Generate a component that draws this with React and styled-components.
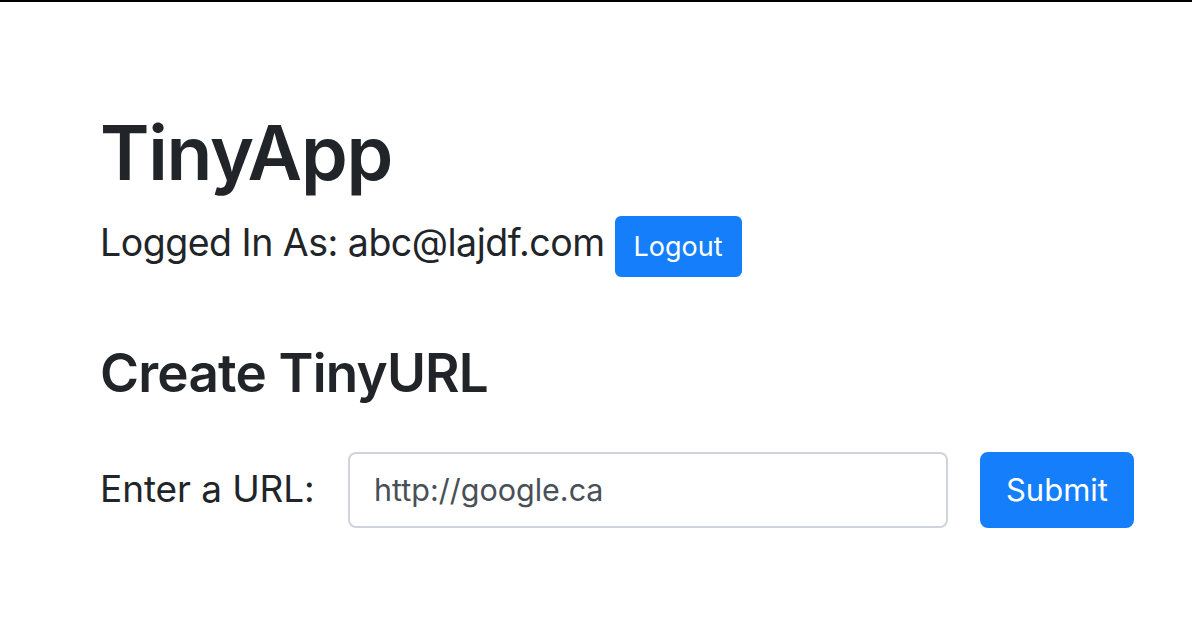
import React from 'react';
import styled, { createGlobalStyle } from 'styled-components';

export default function App(){
	return(
		<>
			<GlobalStyle/>
			<Page>
				<Title>TinyApp</Title>
				<UserRow>
					<UserText>Logged In As: abc@lajdf.com</UserText>
					<Button small>Logout</Button>
				</UserRow>
				<SubTitle>Create TinyURL</SubTitle>
				<UrlForm onSubmit={e => e.preventDefault()}>
					<Label htmlFor="longURL">Enter a URL:</Label>
					<Input id="longURL" type="text" defaultValue="http://google.ca" />
					<Button type="submit">Submit</Button>
				</UrlForm>
			</Page>
		</>
	);
}

const GlobalStyle = createGlobalStyle`
	body {
		margin: 0;
		background-color: #fff;
		border-top: 2px solid #000;
		font-family: Inter, 'Liberation Sans', sans-serif;
		color: #212529;
	}
`;

const Page = styled.div`
	padding: 0 100px;
	display: flex;
	flex-direction: column;
	align-items: flex-start;
`;

const Title = styled.h1`
	font-size: 75px;
	font-weight: 600;
	line-height: 1.2;
	margin: 106px 0 0 0;
	letter-spacing: -1.3px;
`;

const UserRow = styled.div`
	display: flex;
	align-items: baseline;
	gap: 10px;
	margin-top: 18px;
`;

const UserText = styled.span`
	font-size: 37.5px;
	line-height: 1.2;
	letter-spacing: -0.5px;
`;

const Button = styled.button`
	font-family: inherit;
	font-size: ${p => p.small ? '27px' : '31px'};
	line-height: ${p => p.small ? '41px' : '48px'};
	padding: ${p => p.small ? '8px 17px' : '12px 23px'};
	border: 2px solid #157ffb;
	border-radius: ${p => p.small ? '6px' : '8px'};
	background-color: #157ffb;
	color: #fff;
	font-weight: 400;
	cursor: pointer;
`;

const SubTitle = styled.h3`
	font-size: 53px;
	font-weight: 600;
	line-height: 1.2;
	margin: 65px 0 0 0;
	letter-spacing: -0.8px;
`;

const UrlForm = styled.form`
	display: grid;
	grid-template-columns: 216px 600px 154px;
	column-gap: 32px;
	align-items: center;
	margin-top: 46px;
`;

const Label = styled.label`
	font-size: 37px;
	line-height: 1.2;
	letter-spacing: -0.1px;
`;

const Input = styled.input`
	box-sizing: border-box;
	height: 76px;
	width: 100%;
	font-family: inherit;
	font-size: 30.5px;
	color: #495057;
	padding: 0 24px;
	border: 2px solid #ced4da;
	border-radius: 8px;
	outline: none;
`;
